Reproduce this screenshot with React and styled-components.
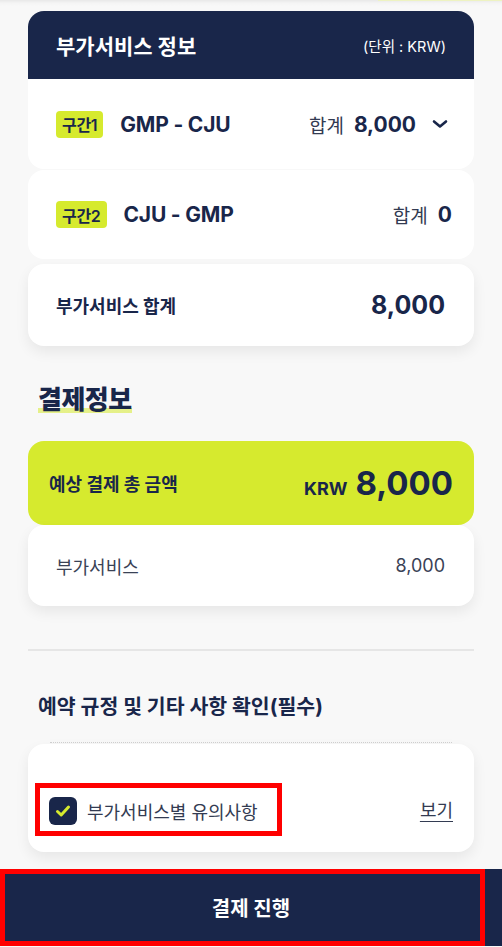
import React from "react";
import styled, { createGlobalStyle } from "styled-components";

const NAVY = "#19264a";
const LIME = "#d6ea2e";

const Global = createGlobalStyle`
  html, body { margin: 0; padding: 0; background: #f8f8f8; }
  body { font-family: Inter, "Noto Sans CJK KR", "Noto Sans", sans-serif; color: ${NAVY}; }
  * { box-sizing: border-box; }
`;

const Page = styled.div`
  width: 502px;
  min-height: 947px;
  background: #f8f8f8;
  display: flex;
  flex-direction: column;
  overflow: hidden;
`;

const TopStrip = styled.div`
  height: 11px;
  display: flex;
  justify-content: flex-end;
  align-items: flex-start;
  background: linear-gradient(#e8e8e8 0px, #f4f4f4 3px, #f8f8f8 6px);
`;

const LimeEdge = styled.div`
  width: 124px;
  height: 1px;
  background: #eef3c2;
`;

const Content = styled.div`
  padding: 0 28px;
  display: flex;
  flex-direction: column;
`;

const Card = styled.div`
  background: #fff;
  border-radius: 16px;
  margin-top: ${(p) => p.$mt || 0}px;
  box-shadow: ${(p) => (p.$shadow ? "0 6px 14px rgba(0,0,0,0.07)" : "none")};
  overflow: hidden;
`;

const Header = styled.div`
  height: 68px;
  background: ${NAVY};
  color: #fff;
  display: flex;
  align-items: center;
  justify-content: space-between;
  padding: 0 28px;
`;

const HeaderTitle = styled.div`
  font-size: 21px;
  font-weight: 700;
`;

const HeaderUnit = styled.div`
  font-size: 14.5px;
  font-weight: 400;
`;

const SegRow = styled.div`
  height: ${(p) => p.$h}px;
  display: flex;
  align-items: center;
  padding: 0 22px 0 28px;
`;

const Badge = styled.span`
  display: inline-flex;
  align-items: center;
  justify-content: center;
  height: 27px;
  padding: 0 6px;
  background: ${LIME};
  border-radius: 4px;
  font-size: 16px;
  font-weight: 600;
  color: ${NAVY};
  letter-spacing: -0.3px;
`;

const Route = styled.span`
  margin-left: ${(p) => p.$ml}px;
  font-size: 21px;
  font-weight: 700;
  letter-spacing: -0.2px;
`;

const Total = styled.div`
  margin-left: auto;
  display: flex;
  align-items: center;
`;

const TotalLabel = styled.span`
  font-size: 19px;
  font-weight: 400;
  color: #333b52;
`;

const TotalValue = styled.span`
  margin-left: 10px;
  font-size: 21px;
  font-weight: 700;
`;

const Chevron = styled.svg`
  margin-left: 16px;
  width: 20px;
  height: 20px;
`;

const SummaryRow = styled.div`
  height: 82px;
  display: flex;
  align-items: center;
  justify-content: space-between;
  padding: 0 29px 0 28px;
`;

const SummaryLabel = styled.span`
  font-size: 18px;
  font-weight: 700;
`;

const SummaryValue = styled.span`
  font-size: 25px;
  font-weight: 700;
`;

const SectionTitle = styled.h2`
  margin: ${(p) => p.$mt}px 0 0 10px;
  font-size: 26px;
  line-height: 30px;
  font-weight: 800;
  letter-spacing: -0.5px;
  align-self: flex-start;
  background: linear-gradient(transparent 76%, rgba(214, 234, 46, 0.55) 76%, rgba(214, 234, 46, 0.55) 92%, transparent 92%);
`;

const PayCard = styled.div`
  margin-top: 26px;
  height: 84px;
  background: ${LIME};
  border-radius: 16px;
  display: flex;
  align-items: center;
  justify-content: space-between;
  padding: 0 21px 0 21px;
`;

const PayLabel = styled.span`
  font-size: 18px;
  font-weight: 700;
`;

const PayAmount = styled.div`
  display: flex;
  align-items: baseline;
`;

const Currency = styled.span`
  font-size: 18px;
  font-weight: 700;
  margin-right: 8px;
`;

const BigNum = styled.span`
  font-size: 33px;
  font-weight: 700;
  line-height: 1;
`;

const DetailCard = styled.div`
  height: 81px;
  background: #fff;
  border-radius: 16px;
  box-shadow: 0 6px 14px rgba(0,0,0,0.07);
  display: flex;
  align-items: center;
  justify-content: space-between;
  padding: 0 29px 0 28px;
  font-size: 18px;
  color: #3a4256;
`;

const Divider = styled.hr`
  margin: 43px 0 0;
  border: 0;
  height: 2px;
  background: #e6e6e6;
`;

const TermsTitle = styled.h3`
  margin: 42px 0 0 10px;
  font-size: 20.5px;
  line-height: 28px;
  font-weight: 700;
`;

const Dotted = styled.div`
  margin: 21px 22px 0;
  border-top: 1px dotted #d0d0d0;
`;

const TermsCard = styled.div`
  position: relative;
  margin-top: 1px;
  height: 108px;
  background: #fff;
  border-radius: 16px;
  box-shadow: 0 6px 14px rgba(0,0,0,0.07);
  display: flex;
  align-items: flex-end;
  justify-content: space-between;
  padding: 0 21px 27px 21px;
`;

const CheckRow = styled.label`
  display: flex;
  align-items: center;
  gap: 10px;
  font-size: 18px;
  color: #333b52;
`;

const CheckBox = styled.span`
  width: 28px;
  height: 28px;
  border-radius: 6px;
  background: ${NAVY};
  display: inline-flex;
  align-items: center;
  justify-content: center;
`;

const ViewLink = styled.a`
  font-size: 18px;
  color: #333b52;
  text-decoration: underline;
  text-underline-offset: 4px;
  line-height: 28px;
`;

const Annotation = styled.div`
  position: absolute;
  left: ${(p) => p.$l}px;
  top: ${(p) => p.$t}px;
  width: ${(p) => p.$w}px;
  height: ${(p) => p.$h}px;
  border: ${(p) => p.$b}px solid #ff0000;
  pointer-events: none;
`;

const BottomButton = styled.button`
  position: relative;
  margin-top: 17px;
  height: 77px;
  width: 502px;
  border: 0;
  background: ${NAVY};
  color: #fff;
  font-family: inherit;
  font-size: 20px;
  font-weight: 700;
  display: flex;
  align-items: center;
  justify-content: center;
  padding: 0;
`;

export default function App() {
  return (
    <>
      <Global />
      <Page>
        <TopStrip>
          <LimeEdge />
        </TopStrip>
        <Content>
          <Card>
            <Header>
              <HeaderTitle>부가서비스 정보</HeaderTitle>
              <HeaderUnit>(단위 : KRW)</HeaderUnit>
            </Header>
            <SegRow $h={90}>
              <Badge>구간1</Badge>
              <Route $ml={17}>GMP - CJU</Route>
              <Total>
                <TotalLabel>합계</TotalLabel>
                <TotalValue>8,000</TotalValue>
                <Chevron viewBox="0 0 20 20" fill="none">
                  <path d="M2 7.5 L8 12.5 L14 7.5" stroke={NAVY} strokeWidth="2.6" strokeLinecap="round" strokeLinejoin="round" />
                </Chevron>
              </Total>
            </SegRow>
          </Card>
          <Card $mt={1}>
            <SegRow $h={89}>
              <Badge>구간2</Badge>
              <Route $ml={17}>CJU - GMP</Route>
              <Total>
                <TotalLabel>합계</TotalLabel>
                <TotalValue>0</TotalValue>
              </Total>
            </SegRow>
          </Card>
          <Card $mt={5} $shadow>
            <SummaryRow>
              <SummaryLabel>부가서비스 합계</SummaryLabel>
              <SummaryValue>8,000</SummaryValue>
            </SummaryRow>
          </Card>

          <SectionTitle $mt={39}>결제정보</SectionTitle>

          <PayCard>
            <PayLabel>예상 결제 총 금액</PayLabel>
            <PayAmount>
              <Currency>KRW</Currency>
              <BigNum>8,000</BigNum>
            </PayAmount>
          </PayCard>
          <DetailCard>
            <span>부가서비스</span>
            <span>8,000</span>
          </DetailCard>

          <Divider />

          <TermsTitle>예약 규정 및 기타 사항 확인(필수)</TermsTitle>
          <Dotted />
          <TermsCard>
            <CheckRow>
              <CheckBox>
                <svg width="18" height="18" viewBox="0 0 18 18" fill="none">
                  <path d="M3.5 9.5 L7.2 13 L14.5 5" stroke={LIME} strokeWidth="3" strokeLinecap="round" strokeLinejoin="round" />
                </svg>
              </CheckBox>
              부가서비스별 유의사항
            </CheckRow>
            <ViewLink>보기</ViewLink>
            <Annotation $l={7} $t={39} $w={247} $h={53} $b={5} />
          </TermsCard>
        </Content>
        <BottomButton>
          결제 진행
          <Annotation $l={0} $t={0} $w={485} $h={77} $b={5} />
        </BottomButton>
      </Page>
    </>
  );
}
